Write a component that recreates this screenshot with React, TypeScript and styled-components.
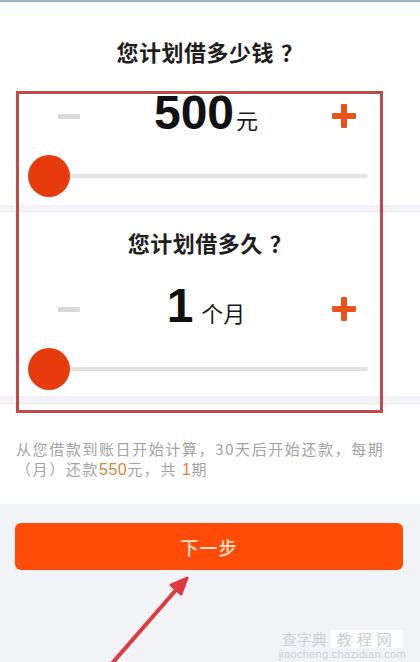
import React from "react";
import styled, { createGlobalStyle } from "styled-components";

const Global = createGlobalStyle`
  html, body { margin: 0; padding: 0; background: #f2f3f7; }
  * { box-sizing: border-box; }
`;

const Page = styled.div`
  position: relative;
  width: 420px;
  height: 662px;
  overflow: hidden;
  background: #f2f3f7;
  border-top: 2px solid #9db6c4;
  font-family: "Liberation Sans", "Noto Sans CJK SC", sans-serif;
  display: flex;
  flex-direction: column;
`;

const Section = styled.section<{ $top: number; $bottom: number; $gapAfter: number }>`
  background: #ffffff;
  padding-top: ${(p) => p.$top}px;
  padding-bottom: ${(p) => p.$bottom}px;
  margin-bottom: ${(p) => p.$gapAfter}px;
  display: flex;
  flex-direction: column;
`;

const Title = styled.h2<{ $gap: number }>`
  margin: 0 0 ${(p) => p.$gap}px;
  font-family: "Noto Sans CJK SC", sans-serif;
  font-size: 22px;
  line-height: 24px;
  font-weight: 700;
  letter-spacing: 0.5px;
  color: #1e1e1e;
  text-align: center;
`;

const Q = styled.span`
  margin-left: 7px;
`;

const ValueRow = styled.div`
  display: grid;
  grid-template-columns: 22px 1fr 24px;
  align-items: center;
  height: 56px;
  padding: 0 64px 0 58px;
  margin-bottom: 14px;
`;

const Minus = styled.span`
  display: block;
  width: 22px;
  height: 5px;
  border-radius: 1px;
  background: #d9d9d9;
`;

const Plus = styled.span`
  position: relative;
  display: block;
  width: 24px;
  height: 24px;
  &::before,
  &::after {
    content: "";
    position: absolute;
    background: #e8531c;
    border-radius: 1px;
  }
  &::before { left: 0; right: 0; top: 9px; height: 6px; }
  &::after { top: 0; bottom: 0; left: 9px; width: 6px; }
`;

const Value = styled.div`
  display: flex;
  align-items: baseline;
  justify-content: center;
  line-height: 56px;
  color: #111;
`;

const Big = styled.span`
  font-family: "Liberation Sans", sans-serif;
  font-weight: 700;
  font-size: 48px;
`;

const Unit = styled.span<{ $gap: number }>`
  font-family: "Noto Sans CJK SC", sans-serif;
  font-size: 22px;
  margin-left: ${(p) => p.$gap}px;
  color: #1a1a1a;
`;

const Slider = styled.div`
  display: flex;
  align-items: center;
  padding: 0 52px 0 28px;
`;

const Thumb = styled.span`
  flex: none;
  width: 42px;
  height: 42px;
  border-radius: 50%;
  background: #e83b0d;
  position: relative;
  z-index: 1;
`;

const Track = styled.span`
  flex: 1;
  height: 4px;
  margin-left: -2px;
  background: #e3e3e3;
  border-radius: 2px;
`;

const Note = styled.div`
  padding: 0 10px 0 16px;
  display: flex;
  flex-direction: column;
  font-family: "Noto Sans CJK SC", sans-serif;
  font-size: 15px;
  line-height: 20px;
  letter-spacing: 1.6px;
  color: #a3a3a3;
  white-space: nowrap;
`;

const NoteLine = styled.span`
  display: block;
  height: 20px;
`;

const Hi = styled.span`
  color: #d8843a;
  font-family: "Liberation Sans", sans-serif;
  font-size: 16px;
  letter-spacing: 0.5px;
`;

const NextButton = styled.button`
  margin: 19px 17px 0 15px;
  height: 47px;
  border: none;
  border-radius: 6px;
  background: #ff4b08;
  color: #ffe0c8;
  font-family: "Noto Sans CJK SC", sans-serif;
  font-size: 18px;
  font-weight: 500;
  letter-spacing: 1px;
`;

const MarkBox = styled.div`
  position: absolute;
  left: 16px;
  top: 89px;
  width: 367px;
  height: 322px;
  border: 3px solid #bf4a4a;
  pointer-events: none;
`;

const Arrow = styled.svg`
  position: absolute;
  left: 0;
  top: 0;
  pointer-events: none;
`;

const Watermark = styled.div`
  position: absolute;
  right: 14px;
  bottom: 2px;
  display: flex;
  flex-direction: column;
  align-items: center;
  color: #c9cbd0;
  font-family: "Noto Sans CJK SC", sans-serif;
  opacity: 0.9;
`;

const WmTop = styled.div`
  display: flex;
  align-items: center;
  gap: 4px;
  font-size: 15px;
  line-height: 18px;
`;

const WmBox = styled.span`
  background: #ffffff;
  padding: 0 6px;
  letter-spacing: 5px;
`;

const WmUrl = styled.div`
  font-family: "Liberation Sans", sans-serif;
  font-size: 11px;
  line-height: 12px;
  letter-spacing: 0.3px;
`;

export default function App() {
  return (
    <Page>
      <Global />
      <Section $top={37} $bottom={8} $gapAfter={8}>
        <Title $gap={22}>
          您计划借多少钱<Q>？</Q>
        </Title>
        <ValueRow>
          <Minus />
          <Value>
            <Big>500</Big>
            <Unit $gap={2}>元</Unit>
          </Value>
          <Plus />
        </ValueRow>
        <Slider>
          <Thumb />
          <Track />
        </Slider>
      </Section>
      <Section $top={17} $bottom={6} $gapAfter={9}>
        <Title $gap={24}>
          您计划借多久<Q>？</Q>
        </Title>
        <ValueRow>
          <Minus />
          <Value>
            <Big>1</Big>
            <Unit $gap={8}>个月</Unit>
          </Value>
          <Plus />
        </ValueRow>
        <Slider>
          <Thumb />
          <Track />
        </Slider>
      </Section>
      <Section $top={34} $bottom={25} $gapAfter={0}>
        <Note>
          <NoteLine>从您借款到账日开始计算，30天后开始还款，每期</NoteLine>
          <NoteLine>
            （月）还款<Hi>550</Hi>元，共 <Hi>1</Hi>期
          </NoteLine>
        </Note>
      </Section>
      <NextButton>下一步</NextButton>
      <MarkBox />
      <Arrow width="420" height="662" viewBox="0 0 420 662">
        <line x1="108" y1="666" x2="176" y2="588" stroke="#e03a3e" strokeWidth="4" strokeLinecap="round" />
        <polygon points="187,576 171,583 181,592" fill="#e03a3e" stroke="#e03a3e" strokeWidth="3" strokeLinejoin="round" />
      </Arrow>
      <Watermark>
        <WmTop>
          <span>查字典</span>
          <WmBox>教程网</WmBox>
        </WmTop>
        <WmUrl>jiaocheng.chazidian.com</WmUrl>
      </Watermark>
    </Page>
  );
}
